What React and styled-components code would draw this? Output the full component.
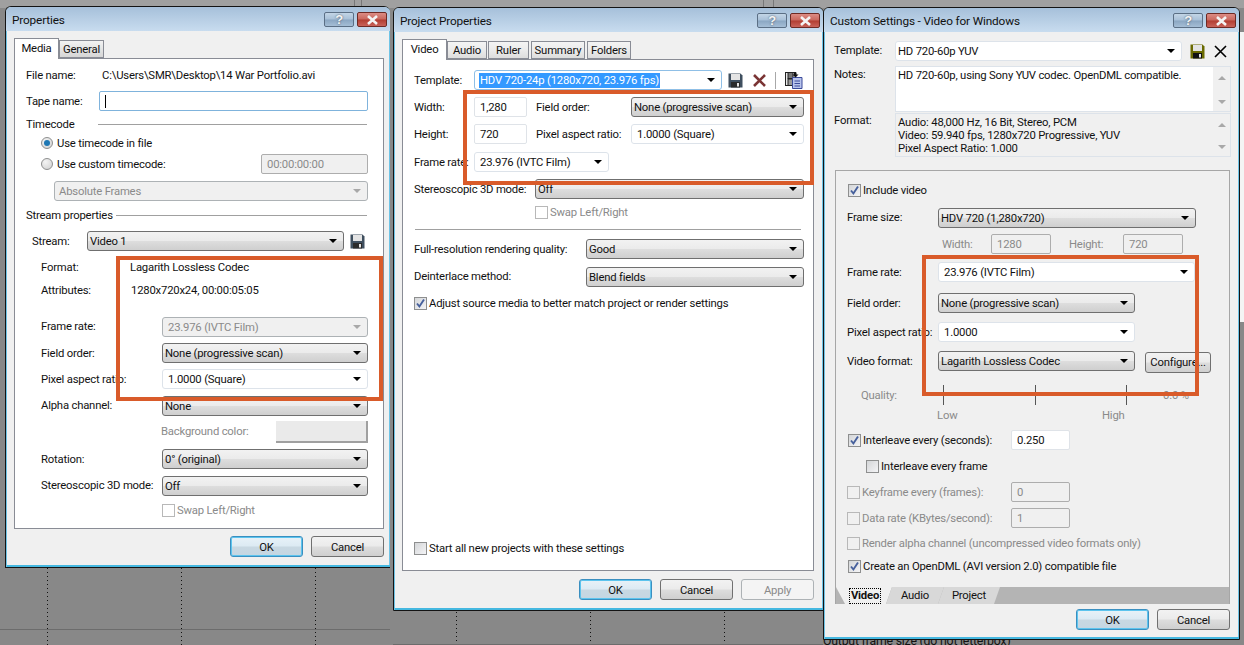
import styled, { createGlobalStyle } from "styled-components"

const GlobalStyle = createGlobalStyle`
    html, body {
        margin: 0;
        padding: 0;
        background: #888888;
    }
    * {
        box-sizing: border-box;
    }
`

const BUTTON_FACE = "linear-gradient(#f2f2f2, #ebebeb 48%, #dddddd 52%, #cfcfcf)"
const TEXT = "#111111"
const MUTED = "#8a8a8a"

function Disk({ body = "#3f4f5f", slot = "#2a2a2a" }) {
    return (
        <svg width="15" height="15" viewBox="0 0 15 15">
            <path d="M0.5 0.5h12l2 2v12h-14z" fill={body} />
            <rect x="3" y="1" width="9" height="6" fill="#e4e4e4" />
            <rect x="3" y="9" width="9" height="5.5" fill={slot} />
            <rect x="9" y="10" width="2" height="3.5" fill="#e4e4e4" />
        </svg>
    )
}

function CrossIcon({ color = "#7b3535", width = 2.6 }) {
    return (
        <svg width="13" height="13" viewBox="0 0 13 13">
            <path d="M1 1L12 12M12 1L1 12" stroke={color} strokeWidth={width} fill="none" />
        </svg>
    )
}

function PasteIcon() {
    return (
        <svg width="18" height="18" viewBox="0 0 18 18">
            <rect x="0.5" y="1.5" width="10" height="13" fill="#e8e8e8" stroke="#222" />
            <rect x="3" y="1.5" width="5" height="6" fill="#777" stroke="#222" />
            <rect x="3" y="8" width="5" height="6.5" fill="#999" stroke="#222" />
            <path d="M7.5 6.5h9.5v11h-9.5z" fill="#b9c4ec" stroke="#3a4a9a" />
            <path d="M9.5 10h5.5M9.5 12.5h5.5M9.5 15h5.5" stroke="#3a4a9a" />
            <path d="M9 1.5h2.5v2h2l-3 3-3-3h1.5z" fill="#111" />
        </svg>
    )
}

function Tick() {
    return (
        <svg width="11" height="11" viewBox="0 0 11 11">
            <path d="M2 5.5l2.4 3L9 1.5" stroke="#46609c" strokeWidth="1.9" fill="none" />
        </svg>
    )
}

function Caption() {
    return (
        <CaptionGroup>
            <HelpButton>?</HelpButton>
            <CloseButton>
                <svg width="13" height="10" viewBox="0 0 13 10">
                    <path d="M2 1L11 9M11 1L2 9" stroke="#f4f4f4" strokeWidth="2.6" fill="none" />
                </svg>
            </CloseButton>
        </CaptionGroup>
    )
}

function Drop({ w, kind = "select", pad, lift, children }) {
    return (
        <DropBox $w={w} $kind={kind} $pad={pad}>
            <DropText $lift={lift}>{children}</DropText>
            <Arrow $off={kind === "disabled"} />
        </DropBox>
    )
}

function Option({ on, off, plain, children }) {
    return (
        <OptionRow $off={off}>
            <CheckBox $off={off} $plain={plain}>{on && <Tick />}</CheckBox>
            {children}
        </OptionRow>
    )
}

function PropertiesWindow() {
    return (
        <Window $x={5} $y={6} $w={385} $h={562} $open>
            <TitleBar>
                <Title>Properties</Title>
                <Caption />
            </TitleBar>
            <Body $pr={6}>
                <TabBar>
                    <Tab $active $w={45}>Media</Tab>
                    <Tab $w={45} $dim>General</Tab>
                </TabBar>
                <Panel $w={370} $h={471}>
                    <Row $mt={6} $pl={11}>
                        <Label $w={76}>File name:</Label>
                        <Value>C:\Users\SMR\Desktop\14 War Portfolio.avi</Value>
                    </Row>
                    <Row $mt={6} $pl={11}>
                        <Label $w={73}>Tape name:</Label>
                        <TextBox $w={269} $focus><Caret /></TextBox>
                    </Row>
                    <Row $mt={4} $h={18} $pl={11}>
                        <Label $w={72}>Timecode</Label>
                        <Rule $w={269} />
                    </Row>
                    <Row $mt={1} $h={18} $pl={26}>
                        <RadioRow><Radio $on />Use timecode in file</RadioRow>
                    </Row>
                    <Row $mt={2} $pl={26}>
                        <RadioRow $w={220}><Radio />Use custom timecode:</RadioRow>
                        <TextBox $w={107} $off>00:00:00:00</TextBox>
                    </Row>
                    <Row $mt={7} $pl={39}>
                        <Drop w={314} kind="disabled" pad={4}>Absolute Frames</Drop>
                    </Row>
                    <Row $mt={4} $pl={11}>
                        <Label $w={90}>Stream properties</Label>
                        <Rule $w={251} />
                    </Row>
                    <Row $mt={6} $pl={17}>
                        <Label $w={55}>Stream:</Label>
                        <Drop w={257}>Video 1</Drop>
                        <IconSlot $ml={6}><Disk /></IconSlot>
                    </Row>
                    <Row $mt={6} $pl={26}>
                        <Label $w={89}>Format:</Label>
                        <Value>Lagarith Lossless Codec</Value>
                    </Row>
                    <Row $mt={3} $pl={26}>
                        <Label $w={90}>Attributes:</Label>
                        <Value>1280x720x24, 00:00:05:05</Value>
                    </Row>
                    <Row $mt={17} $pl={26}>
                        <Label $w={121} $lift>Frame rate:</Label>
                        <Drop w={206} kind="disabled">23.976 (IVTC Film)</Drop>
                    </Row>
                    <Row $mt={6} $pl={26}>
                        <Label $w={121}>Field order:</Label>
                        <Drop w={206}>None (progressive scan)</Drop>
                    </Row>
                    <Row $mt={6} $pl={26}>
                        <Label $w={121}>Pixel aspect ratio:</Label>
                        <Drop w={206} kind="combo">1.0000 (Square)</Drop>
                    </Row>
                    <Row $mt={7} $pl={26}>
                        <Label $w={121} $lift>Alpha channel:</Label>
                        <Drop w={206}>None</Drop>
                    </Row>
                    <Row $mt={5} $h={22} $pl={146}>
                        <Label $w={115} $off $lift>Background color:</Label>
                        <ColorButton />
                    </Row>
                    <Row $mt={6} $pl={26}>
                        <Label $w={121}>Rotation:</Label>
                        <Drop w={206}>0° (original)</Drop>
                    </Row>
                    <Row $mt={7} $pl={26}>
                        <Label $w={121} $lift>Stereoscopic 3D mode:</Label>
                        <Drop w={206}>Off</Drop>
                    </Row>
                    <Row $mt={8} $h={13} $pl={147}>
                        <Option off>Swap Left/Right</Option>
                    </Row>
                </Panel>
                <ButtonRow $mt={7}>
                    <DialogButton $primary>OK</DialogButton>
                    <DialogButton>Cancel</DialogButton>
                </ButtonRow>
            </Body>
        </Window>
    )
}

function ProjectWindow() {
    return (
        <Window $x={393} $y={7} $w={431} $h={604}>
            <TitleBar>
                <Title>Project Properties</Title>
                <Caption />
            </TitleBar>
            <Body $pr={9}>
                <TabBar>
                    <Tab $active $w={45}>Video</Tab>
                    <Tab $w={40}>Audio</Tab>
                    <Tab $w={41} $ml={1}>Ruler</Tab>
                    <Tab $w={54} $ml={2}>Summary</Tab>
                    <Tab $w={44} $ml={2}>Folders</Tab>
                </TabBar>
                <Panel $w={412} $h={512}>
                    <Row $mt={10} $pl={11}>
                        <Label $w={60}>Template:</Label>
                        <Drop w={248} kind="focus"><Selected>HDV 720-24p (1280x720, 23.976 fps)</Selected></Drop>
                        <IconSlot $ml={6}><Disk /></IconSlot>
                        <IconSlot $ml={10}><CrossIcon /></IconSlot>
                        <ToolDivider />
                        <IconSlot $ml={9}><PasteIcon /></IconSlot>
                    </Row>
                    <Row $mt={7} $pl={11}>
                        <Label $w={60}>Width:</Label>
                        <TextBox $w={53}>1,280</TextBox>
                        <Label $w={95} $ml={9}>Field order:</Label>
                        <Drop w={173}>None (progressive scan)</Drop>
                    </Row>
                    <Row $mt={7} $pl={11}>
                        <Label $w={60}>Height:</Label>
                        <TextBox $w={53}>720</TextBox>
                        <Label $w={95} $ml={9}>Pixel aspect ratio:</Label>
                        <Drop w={173} kind="combo">1.0000 (Square)</Drop>
                    </Row>
                    <Row $mt={8} $pl={11}>
                        <Label $w={60}>Frame rate:</Label>
                        <Drop w={135} kind="combo">23.976 (IVTC Film)</Drop>
                    </Row>
                    <Row $mt={7} $pl={11}>
                        <Label $w={121}>Stereoscopic 3D mode:</Label>
                        <Drop w={269}>Off</Drop>
                    </Row>
                    <Row $mt={7} $h={13} $pl={132}>
                        <Option off>Swap Left/Right</Option>
                    </Row>
                    <Row $mt={10} $h={1} $pl={12}>
                        <Rule $w={386} />
                    </Row>
                    <Row $mt={9} $pl={11}>
                        <Label $w={172}>Full-resolution rendering quality:</Label>
                        <Drop w={218}>Good</Drop>
                    </Row>
                    <Row $mt={8} $pl={11}>
                        <Label $w={172} $lift>Deinterlace method:</Label>
                        <Drop w={218}>Blend fields</Drop>
                    </Row>
                    <Row $mt={9} $h={14} $pl={11}>
                        <Option on>Adjust source media to better match project or render settings</Option>
                    </Row>
                    <Row $mt={231} $h={14} $pl={11}>
                        <Option>Start all new projects with these settings</Option>
                    </Row>
                </Panel>
                <ButtonRow $mt={8}>
                    <DialogButton $primary>OK</DialogButton>
                    <DialogButton>Cancel</DialogButton>
                    <DialogButton $off>Apply</DialogButton>
                </ButtonRow>
            </Body>
        </Window>
    )
}

function CustomWindow() {
    return (
        <Window $x={823} $y={7} $w={417} $h={633}>
            <TitleBar>
                <Title>Custom Settings - Video for Windows</Title>
                <Caption />
            </TitleBar>
            <Body $pr={9} $pt={9} $pl={0}>
                <Row $pl={10}>
                    <Label $w={61} $lift>Template:</Label>
                    <Drop w={287} kind="flat" pad={2} lift>HD 720-60p YUV</Drop>
                    <IconSlot $ml={8}><Disk body="#6a6a00" slot="#111" /></IconSlot>
                    <IconSlot $ml={9}><CrossIcon color="#000" width={1.6} /></IconSlot>
                </Row>
                <Row $mt={5} $h={46} $pl={10} $top>
                    <Label $w={61} $pt={2}>Notes:</Label>
                    <NoteBox>
                        <NoteText>HD 720-60p, using Sony YUV codec. OpenDML compatible.</NoteText>
                        <ScrollCol><ScrollUp /><ScrollDown /></ScrollCol>
                    </NoteBox>
                </Row>
                <Row $mt={1} $h={44} $pl={10} $top>
                    <Label $w={61}>Format:</Label>
                    <NoteBox $grey>
                        <NoteText>
                            Audio: 48,000 Hz, 16 Bit, Stereo, PCM<br />
                            Video: 59.940 fps, 1280x720 Progressive, YUV<br />
                            Pixel Aspect Ratio: 1.000
                        </NoteText>
                        <ScrollCol><ScrollUp /><ScrollDown /></ScrollCol>
                    </NoteBox>
                </Row>
                <Group>
                    <Row $mt={12} $h={14} $pl={12}>
                        <Option on>Include video</Option>
                    </Row>
                    <Row $mt={11} $pl={11}>
                        <Label $w={91} $lift>Frame size:</Label>
                        <Drop w={258}>HDV 720 (1,280x720)</Drop>
                    </Row>
                    <Row $mt={6} $pl={106}>
                        <Label $w={49} $off>Width:</Label>
                        <TextBox $w={60} $off>1280</TextBox>
                        <Label $w={54} $ml={18} $off>Height:</Label>
                        <TextBox $w={60} $off>720</TextBox>
                    </Row>
                    <Row $mt={8} $pl={11}>
                        <Label $w={91}>Frame rate:</Label>
                        <Drop w={257} kind="flat">23.976 (IVTC Film)</Drop>
                    </Row>
                    <Row $mt={11} $pl={11}>
                        <Label $w={91}>Field order:</Label>
                        <Drop w={197}>None (progressive scan)</Drop>
                    </Row>
                    <Row $mt={9} $pl={11}>
                        <Label $w={91}>Pixel aspect ratio:</Label>
                        <Drop w={197} kind="flat">1.0000</Drop>
                    </Row>
                    <Row $mt={9} $pl={11}>
                        <Label $w={91}>Video format:</Label>
                        <Drop w={197}>Lagarith Lossless Codec</Drop>
                        <ConfigureButton>Configure...</ConfigureButton>
                    </Row>
                    <Row $mt={14} $pl={25}>
                        <Label $w={82} $off>Quality:</Label>
                        <Ticks><TickMark /><TickMark /><TickMark /></Ticks>
                        <Label $w={40} $ml={36} $off>0.0 %</Label>
                    </Row>
                    <Row $mt={2} $h={16} $pl={101}>
                        <Label $w={165} $off>Low</Label>
                        <Label $w={40} $off>High</Label>
                    </Row>
                    <Row $mt={7} $pl={12}>
                        <OptionSlot $w={163}><Option on>Interleave every (seconds):</Option></OptionSlot>
                        <TextBox $w={59}>0.250</TextBox>
                    </Row>
                    <Row $mt={9} $h={14} $pl={30}>
                        <Option>Interleave every frame</Option>
                    </Row>
                    <Row $mt={9} $pl={11}>
                        <OptionSlot $w={164}><Option off plain>Keyframe every (frames):</Option></OptionSlot>
                        <TextBox $w={59} $off>0</TextBox>
                    </Row>
                    <Row $mt={6} $pl={11}>
                        <OptionSlot $w={164}><Option off plain>Data rate (KBytes/second):</Option></OptionSlot>
                        <TextBox $w={59} $off>1</TextBox>
                    </Row>
                    <Row $mt={8} $h={14} $pl={11}>
                        <Option off plain>Render alpha channel (uncompressed video formats only)</Option>
                    </Row>
                    <Row $mt={9} $h={14} $pl={12}>
                        <Option on>Create an OpenDML (AVI version 2.0) compatible file</Option>
                    </Row>
                    <TabStrip>
                        <StripTab $active $w={56}><FocusText>Video</FocusText></StripTab>
                        <StripTab $w={58} $ml={-6}>Audio</StripTab>
                        <StripTab $w={62} $ml={-6}>Project</StripTab>
                    </TabStrip>
                </Group>
                <ButtonRow $mt={5} >
                    <DialogButton $primary>OK</DialogButton>
                    <DialogButton>Cancel</DialogButton>
                </ButtonRow>
            </Body>
        </Window>
    )
}

export default function App() {
    return (
        <Desktop>
            <GlobalStyle />
            <TopStrip />
            <RightStrip />
            <TopMark $x={354} />
            <TopMark $x={361} />
            <TopMark $x={763} />
            <TopMark $x={773} />
            <GuideV $x={47} />
            <GuideV $x={181} />
            <GuideV $x={315} />
            <GuideV $x={456} />
            <GuideV $x={590} />
            <GuideV $x={724} />
            <GuideH $x={0} $y={629} $w={390} />
            <GuideH $x={393} $y={644} $w={430} />
            <BackText>Output frame size (do not letterbox)</BackText>
            <PropertiesWindow />
            <ProjectWindow />
            <CustomWindow />
            <Callout $x={116} $y={256} $w={267} $h={145} />
            <Callout $x={463} $y={90} $w={351} $h={95} />
            <Callout $x={922} $y={255} $w={277} $h={141} />
        </Desktop>
    )
}

const Desktop = styled.div`
    position: relative;
    width: 1244px;
    height: 645px;
    overflow: hidden;
    background: #888888;
    font-family: "Roboto", "Liberation Sans", sans-serif;
    font-size: 11.3px;
    letter-spacing: -0.2px;
    color: ${TEXT};
`

const TopStrip = styled.div`
    position: absolute;
    left: 0;
    top: 0;
    width: 100%;
    height: 8px;
    background: #a0a0a0;
`

const TopMark = styled.div`
    position: absolute;
    left: ${p => p.$x}px;
    top: 0;
    width: 1px;
    height: 7px;
    background: #777777;
`

const RightStrip = styled.div`
    position: absolute;
    right: 0;
    top: 32px;
    width: 4px;
    height: 290px;
    background: #f4f4f4;
`

const GuideV = styled.div`
    position: absolute;
    left: ${p => p.$x}px;
    top: 568px;
    width: 1px;
    height: 77px;
    background: repeating-linear-gradient(#111 0 1px, transparent 1px 4px);
`

const GuideH = styled.div`
    position: absolute;
    left: ${p => p.$x}px;
    top: ${p => p.$y}px;
    width: ${p => p.$w}px;
    height: 1px;
    background: #6c6c6c;
`

const BackText = styled.div`
    position: absolute;
    left: 823px;
    top: 634px;
    font-size: 12.3px;
    color: #111;
`

const Callout = styled.div`
    position: absolute;
    left: ${p => p.$x}px;
    top: ${p => p.$y}px;
    width: ${p => p.$w}px;
    height: ${p => p.$h}px;
    border: 4px solid #d95b2a;
    pointer-events: none;
`

const Window = styled.section`
    position: absolute;
    left: ${p => p.$x}px;
    top: ${p => p.$y}px;
    width: ${p => p.$w}px;
    height: ${p => p.$h}px;
    display: flex;
    flex-direction: column;
    background: #f0f0f0;
    border: 1px solid #141414;
    border-right-width: ${p => (p.$open ? 0 : 1)}px;
    border-radius: 6px 6px 0 0;
    box-shadow: inset 1px 0 0 #6fc4e6, inset 0 -2px 0 #45b8e0, inset -1px 0 0 #6fc4e6;
    overflow: hidden;
`

const TitleBar = styled.header`
    height: 24px;
    flex: none;
    display: flex;
    align-items: flex-start;
    justify-content: space-between;
    padding: 5px 3px 0 6px;
    background: linear-gradient(#a6c0da, #c8dcef);
`

const Title = styled.h1`
    margin: 1px 0 0;
    font-size: 11.8px;
    font-weight: 400;
    letter-spacing: -0.15px;
    line-height: 15px;
    color: #111;
`

const CaptionGroup = styled.div`
    display: flex;
    gap: 3px;
`

const HelpButton = styled.div`
    width: 30px;
    height: 15px;
    display: flex;
    align-items: center;
    justify-content: center;
    border: 1px solid #5b6f85;
    border-radius: 2px;
    background: linear-gradient(#c3d5e6, #a8c0d8 48%, #8aa6c2 52%, #a5bed6);
    color: #f4f4f4;
    font: 700 13px "Liberation Sans", sans-serif;
    text-shadow: 0 0 2px #3c4a5c;
`

const CloseButton = styled.div`
    width: 30px;
    height: 15px;
    display: flex;
    align-items: center;
    justify-content: center;
    border: 1px solid #6e2a24;
    border-radius: 2px;
    background: linear-gradient(#dc8c84, #c9675d 48%, #b23d31 52%, #c9635a);
`

const Body = styled.div`
    flex: 1;
    display: flex;
    flex-direction: column;
    padding: ${p => p.$pt ?? 7}px ${p => p.$pr}px 0 ${p => p.$pl ?? 8}px;
`

const TabBar = styled.div`
    height: 20px;
    flex: none;
    display: flex;
    align-items: flex-end;
    position: relative;
    z-index: 1;
`

const Tab = styled.div`
    width: ${p => p.$w}px;
    height: ${p => (p.$active ? 21 : 18)}px;
    margin-left: ${p => p.$ml ?? 0}px;
    margin-bottom: ${p => (p.$active ? -1 : 0)}px;
    padding: ${p => (p.$active ? "0 0 2px" : "1px 0 0")};
    display: flex;
    align-items: center;
    justify-content: center;
    border: 1px solid #898c95;
    border-bottom: ${p => (p.$active ? "0" : "1px solid #898c95")};
    background: ${p => (p.$active ? "#ffffff" : p.$dim ? "linear-gradient(#f2f2f2, #d6d6d6)" : "linear-gradient(#f4f4f4, #ebebeb 50%, #dddddd)")};
`

const Panel = styled.div`
    width: ${p => p.$w}px;
    height: ${p => p.$h}px;
    flex: none;
    background: #ffffff;
    border: 1px solid #898c95;
    display: flex;
    flex-direction: column;
`

const Row = styled.div`
    height: ${p => p.$h ?? 20}px;
    flex: none;
    margin-top: ${p => p.$mt ?? 0}px;
    padding-left: ${p => p.$pl ?? 0}px;
    display: flex;
    align-items: ${p => (p.$top ? "flex-start" : "center")};
    white-space: nowrap;
`

const Label = styled.label`
    width: ${p => p.$w}px;
    flex: none;
    margin-left: ${p => p.$ml ?? 0}px;
    padding-top: ${p => p.$pt ?? 1}px;
    padding-bottom: ${p => (p.$lift ? 3 : 0)}px;
    color: ${p => (p.$off ? MUTED : "inherit")};
`

const Value = styled.span`
    padding-top: 1px;
`

const Rule = styled.div`
    width: ${p => p.$w}px;
    height: 1px;
    flex: none;
    background: #a0a0a0;
`

const RadioRow = styled.div`
    display: flex;
    align-items: center;
    gap: 4px;
    width: ${p => (p.$w ? `${p.$w}px` : "auto")};
    flex: none;
`

const Radio = styled.span`
    position: relative;
    width: 12px;
    height: 12px;
    flex: none;
    border: 1px solid #8e8f8f;
    border-radius: 50%;
    background: radial-gradient(circle at 35% 30%, #f4f4f4, #cfcfcf);

    &::after {
        content: "";
        display: ${p => (p.$on ? "block" : "none")};
        position: absolute;
        left: 2px;
        top: 2px;
        width: 6px;
        height: 6px;
        border-radius: 50%;
        background: #1f78b4;
    }
`

const TextBox = styled.div`
    width: ${p => p.$w}px;
    height: 20px;
    flex: none;
    display: flex;
    align-items: center;
    padding-left: 5px;
    border: 1px solid ${p => (p.$focus ? "#7fb3dc" : p.$off ? "#adadad" : "#dfe3e8")};
    border-radius: 2px;
    background: ${p => (p.$off ? "#f0f0f0" : "#ffffff")};
    color: ${p => (p.$off ? MUTED : "inherit")};
`

const Caret = styled.span`
    width: 1px;
    height: 13px;
    background: #000;
`

const DropBox = styled.div`
    width: ${p => p.$w}px;
    height: 20px;
    flex: none;
    display: flex;
    align-items: center;
    justify-content: space-between;
    padding: 0 6px 0 ${p => p.$pad ?? (p.$kind === "select" ? 2 : p.$kind === "focus" ? 4 : 5)}px;
    border-radius: 3px;
    border: 1px solid ${p =>
        p.$kind === "select" ? "#6f6f6f"
        : p.$kind === "disabled" ? "#adb2b5"
        : p.$kind === "focus" ? "#8fbfe6"
        : "#dde3ea"};
    background: ${p =>
        p.$kind === "select" ? BUTTON_FACE
        : p.$kind === "disabled" ? "#f0f0f0"
        : "#ffffff"};
    color: ${p => (p.$kind === "disabled" ? MUTED : "inherit")};
`

const DropText = styled.span`
    padding-top: ${p => (p.$lift ? 0 : 1)}px;
`

const Arrow = styled.i`
    width: 0;
    height: 0;
    flex: none;
    border-left: 4px solid transparent;
    border-right: 4px solid transparent;
    border-top: 4px solid ${p => (p.$off ? "#a8a8a8" : "#000")};
`

const Selected = styled.span`
    display: inline-block;
    padding: 0 1px;
    line-height: 15px;
    background: #3399ff;
    color: #fff;
`

const IconSlot = styled.span`
    display: flex;
    flex: none;
    margin-left: ${p => p.$ml ?? 0}px;
`

const ToolDivider = styled.span`
    width: 1px;
    height: 17px;
    flex: none;
    margin-left: 9px;
    background: #a8a8a8;
`

const OptionRow = styled.div`
    display: flex;
    align-items: center;
    gap: 2px;
    color: ${p => (p.$off ? MUTED : "inherit")};
`

const OptionSlot = styled.div`
    width: ${p => p.$w}px;
    flex: none;
`

const CheckBox = styled.span`
    width: 13px;
    height: 13px;
    flex: none;
    display: flex;
    align-items: center;
    justify-content: center;
    border: 1px solid ${p => (p.$off ? "#b8b8b8" : "#8e8f8f")};
    background: ${p => (p.$off ? "transparent" : "linear-gradient(135deg, #d4d6d8, #f4f4f6)")};
`

const ColorButton = styled.div`
    width: 92px;
    height: 22px;
    background: #eaeaea;
    border-right: 2px solid #a0a0a0;
    border-bottom: 2px solid #a0a0a0;
`

const ButtonRow = styled.div`
    display: flex;
    justify-content: flex-end;
    gap: 8px;
    margin-top: ${p => p.$mt}px;
`

const DialogButton = styled.button`
    width: 73px;
    height: 21px;
    padding: 1px 0 0;
    font: inherit;
    letter-spacing: inherit;
    color: ${p => (p.$off ? MUTED : TEXT)};
    border-radius: 3px;
    border: 1px solid ${p => (p.$primary ? "#3a8fc0" : p.$off ? "#adb2b5" : "#707070")};
    background: ${p =>
        p.$primary ? "linear-gradient(#e8f2f8, #dceaf3 48%, #c8d8e2 52%, #c4d6e2)"
        : p.$off ? "#f4f4f4"
        : BUTTON_FACE};
    box-shadow: ${p => (p.$primary ? "inset 0 0 0 1px #5cc4ee" : "none")};
`

const ConfigureButton = styled(DialogButton)`
    width: 66px;
    margin: 2px 0 0 10px;
`

const NoteBox = styled.div`
    width: 336px;
    height: 100%;
    flex: none;
    display: flex;
    border: 1px solid #dde3ea;
    background: ${p => (p.$grey ? "#f0f0f0" : "#ffffff")};
`

const NoteText = styled.div`
    flex: 1;
    padding: 2px 0 0 2px;
    line-height: 13px;
    white-space: nowrap;
`

const ScrollCol = styled.div`
    width: 17px;
    flex: none;
    display: flex;
    flex-direction: column;
    align-items: center;
    justify-content: space-between;
    padding: 9px 0 7px;
    background: #f0f0f0;
`

const ScrollUp = styled.i`
    border-left: 4px solid transparent;
    border-right: 4px solid transparent;
    border-bottom: 4px solid #a8a8a8;
`

const ScrollDown = styled.i`
    border-left: 4px solid transparent;
    border-right: 4px solid transparent;
    border-top: 4px solid #a8a8a8;
`

const Group = styled.div`
    width: 395px;
    height: 434px;
    flex: none;
    margin: 13px 0 0 11px;
    display: flex;
    flex-direction: column;
    border: 1px solid #a6a6a6;
    border-bottom: 0;
`

const Ticks = styled.div`
    width: 184px;
    height: 20px;
    flex: none;
    display: flex;
    justify-content: space-between;
`

const TickMark = styled.span`
    width: 1px;
    height: 20px;
    background: #555;
`

const TabStrip = styled.div`
    height: 17px;
    flex: none;
    margin-top: auto;
    display: flex;
    background: #b4b4b4;
`

const StripTab = styled.div`
    width: ${p => p.$w}px;
    margin-left: ${p => p.$ml ?? 0}px;
    display: flex;
    align-items: center;
    justify-content: center;
    background: ${p => (p.$active ? "#f0f0f0" : "#d8d8d8")};
    clip-path: ${p => (p.$active
        ? "polygon(0 0, 100% 0, calc(100% - 6px) 100%, 9px 100%)"
        : "polygon(6px 0, 100% 0, calc(100% - 6px) 100%, 0 100%)")};
`

const FocusText = styled.span`
    font-weight: 700;
    line-height: 14px;
    padding: 0 1px;
    outline: 1px dotted #000;
    margin-left: 2px;
`
